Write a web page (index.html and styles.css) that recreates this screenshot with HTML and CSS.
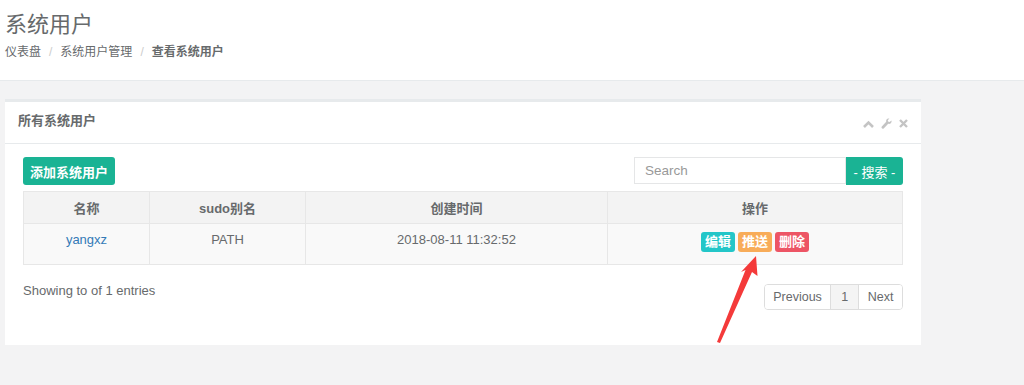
FILE: index.html
```html
<!DOCTYPE html>
<html lang="zh">
<head>
<meta charset="utf-8">
<link rel="stylesheet" href="styles.css">
</head>
<body>
<div class="page">
  <div class="page-heading">
    <h2 class="title">系统用户</h2>
    <ol class="breadcrumb">
      <li>仪表盘</li>
      <li class="sep">/</li>
      <li>系统用户管理</li>
      <li class="sep">/</li>
      <li class="active">查看系统用户</li>
    </ol>
  </div>
  <div class="wrapper">
    <div class="ibox">
      <div class="ibox-title">
        <h5>所有系统用户</h5>
        <div class="tools">
          <svg width="11" height="8" viewBox="0 0 11 8"><path d="M1 7 L5.5 2.5 L10 7" fill="none" stroke="#c4c4c4" stroke-width="2.6"/></svg>
          <svg width="11" height="12" viewBox="0 0 11 12"><path d="M7.5 0.5 C5.8 0.5 4.8 2 5.2 3.8 L0.8 8.6 C0.2 9.2 0.4 10.6 1.6 10.8 C2 10.9 2.4 10.7 2.7 10.4 L7.2 5.8 C9 6.3 10.6 5 10.6 3.2 L10.4 2.4 L8.6 4 L7 3.6 L6.8 2.2 L8.4 0.6 Z" fill="#c4c4c4"/></svg>
          <svg width="9" height="9" viewBox="0 0 9 9"><path d="M1 1 L8 8 M8 1 L1 8" stroke="#c4c4c4" stroke-width="2.4"/></svg>
        </div>
      </div>
      <div class="ibox-content">
        <div class="toolbar">
          <button class="btn-primary">添加系统用户</button>
          <div class="search">
            <input class="search-input" type="text" placeholder="Search">
            <button class="search-btn">- 搜索 -</button>
          </div>
        </div>
        <table class="table">
          <colgroup>
            <col style="width:126px"><col style="width:156px"><col style="width:302px"><col>
          </colgroup>
          <thead>
            <tr><th>名称</th><th>sudo别名</th><th>创建时间</th><th>操作</th></tr>
          </thead>
          <tbody>
            <tr>
              <td><a class="link">yangxz</a></td>
              <td>PATH</td>
              <td>2018-08-11 11:32:52</td>
              <td class="ops"><span class="tag info">编辑</span><span class="tag warn">推送</span><span class="tag danger">删除</span></td>
            </tr>
          </tbody>
        </table>
        <div class="footer">
          <div class="info-text">Showing to of 1 entries</div>
          <ul class="pagination">
            <li>Previous</li>
            <li class="current">1</li>
            <li>Next</li>
          </ul>
        </div>
      </div>
    </div>
  </div>
  <svg class="arrow" width="1024" height="385" viewBox="0 0 1024 385">
    <polygon points="717,342 745.5,270 741,272 756,256 757.5,276 752,272 720,343" fill="#f43a3a"/>
  </svg>
</div>
</body>
</html>
```

FILE: styles.css
```css
* { box-sizing: border-box; }
html, body { margin: 0; padding: 0; }
body {
  background: #f3f3f4;
  font-family: "Liberation Sans", Arial, "Noto Sans CJK SC", sans-serif;
  font-size: 13px;
  color: #676a6c;
}
.page { position: relative; width: 1024px; height: 385px; overflow: hidden; }
.page-heading {
  background: #fff;
  height: 81px;
  border-bottom: 1px solid #e7eaec;
  padding: 11px 5px 0;
}
.title {
  margin: 0;
  font-size: 22px;
  font-weight: normal;
  line-height: 28px;
  color: #676a6c;
}
.breadcrumb {
  list-style: none;
  margin: 4px 0 0;
  padding: 0;
  display: flex;
  font-size: 12px;
  line-height: 18px;
  color: #676a6c;
}
.breadcrumb .sep { color: #ccc; margin: 0 8px; }
.breadcrumb .active { font-weight: bold; }
.wrapper { padding: 18px 0 0 5px; }
.ibox {
  width: 916px;
  background: #fff;
  border-top: 3px solid #e7eaec;
}
.ibox-title {
  height: 42px;
  border-bottom: 1px solid #e7eaec;
  padding: 0 13px;
  display: flex;
  align-items: center;
  justify-content: space-between;
}
.ibox-title h5 {
  margin: 0 0 6px;
  font-size: 13px;
  font-weight: bold;
  color: #676a6c;
}
.tools { display: flex; align-items: center; gap: 7px; margin-top: 2px; }
.ibox-content { padding: 13px 18px 35px; }
.toolbar {
  display: flex;
  justify-content: space-between;
  align-items: flex-start;
  height: 28px;
}
.btn-primary {
  height: 28px;
  width: 92px;
  background: #1ab394;
  color: #fff;
  border: none;
  border-radius: 3px;
  font-family: inherit;
  font-size: 13px;
  font-weight: bold;
  padding: 0;
}
.search { display: flex; }
.search-input {
  width: 212px;
  height: 27px;
  border: 1px solid #e5e6e7;
  padding: 0 10px;
  font-family: inherit;
  font-size: 13.5px;
  color: #676a6c;
  outline: none;
}
.search-input::placeholder { color: #999; }
.search-btn {
  width: 57px;
  height: 28px;
  background: #1ab394;
  color: #fff;
  border: none;
  border-radius: 0 3px 3px 0;
  font-family: inherit;
  font-size: 13px;
  padding: 0;
}
.table {
  width: 880px;
  margin-top: 6px;
  border-collapse: collapse;
  table-layout: fixed;
}
.table th, .table td {
  border: 1px solid #e7e7e7;
  text-align: center;
  font-size: 13px;
}
.table th {
  background: #f3f3f3;
  font-weight: bold;
  height: 32px;
  padding: 0 8px;
  color: #676a6c;
}
.table td {
  background: #f9f9f9;
  height: 41px;
  padding: 7px 8px 0;
  vertical-align: top;
  line-height: 18px;
}
.link { color: #337ab7; }
.ops { font-size: 0; }
.tag {
  display: inline-block;
  font-size: 13px;
  font-weight: bold;
  color: #fff;
  line-height: 20px;
  padding: 0 4px;
  border-radius: 3px;
  margin: 1px 1.5px 0;
}
.tag.info { background: #23c6c8; }
.tag.warn { background: #f8ac59; }
.tag.danger { background: #ed5565; }
.footer {
  display: flex;
  justify-content: space-between;
  align-items: flex-start;
  margin-top: 18px;
}
.info-text { line-height: 18px; margin-top: -1px; }
.pagination {
  list-style: none;
  margin: 1px 0 0;
  padding: 0;
  display: flex;
  border: 1px solid #ddd;
  border-radius: 4px;
  overflow: hidden;
}
.pagination li {
  height: 24px;
  line-height: 24px;
  padding: 0 8.5px;
  font-size: 12.5px;
  color: #676a6c;
  background: #fff;
  border-left: 1px solid #ddd;
}
.pagination li.current { padding: 0 10px; }
.pagination li:first-child { border-left: none; }
.pagination li.current { background: #f4f4f4; }
.arrow { position: absolute; left: 0; top: 0; pointer-events: none; }
```
